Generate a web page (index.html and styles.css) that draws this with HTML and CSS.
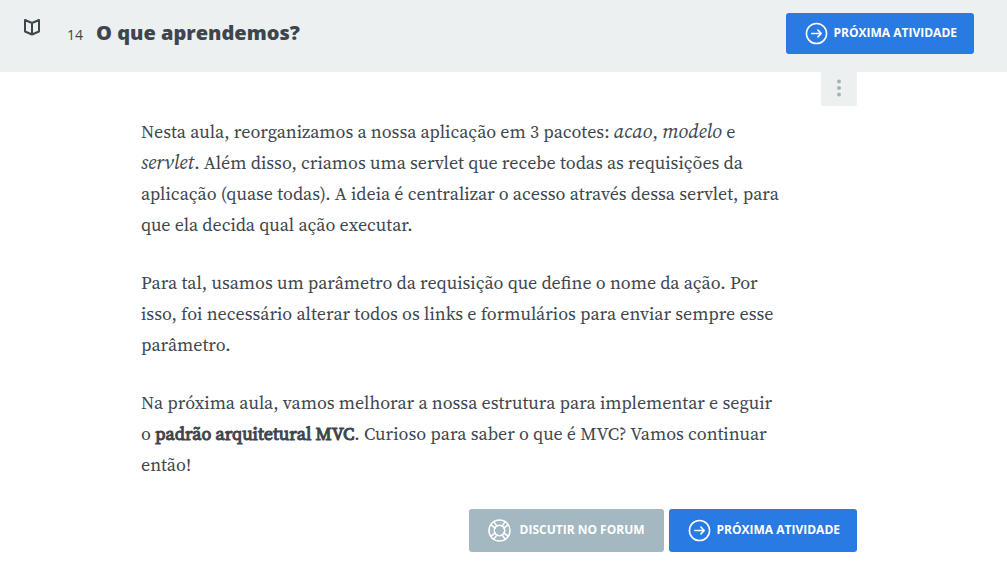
FILE: index.html
```html
<!DOCTYPE html>
<html lang="pt-BR">
<head>
<meta charset="utf-8">
<meta name="viewport" content="width=device-width, initial-scale=1">
<title>O que aprendemos?</title>
<link rel="stylesheet" href="styles.css">
</head>
<body>
<header class="topbar">
  <svg class="book-icon" viewBox="0 0 18 18" aria-hidden="true"><path d="M2 2 9 5 16 2V13.500L9 16.500 2 13.500ZM9 5V16"/></svg>
  <h1 class="heading"><span class="number">14</span><span class="title">O que aprendemos?</span></h1>
  <a class="button button-next" href="#next">
    <svg class="icon" viewBox="0 0 24 24" aria-hidden="true"><circle cx="12" cy="12" r="10.500"/><path d="M7 12H17M13.500 8.500 17 12l-3.500 3.500"/></svg>
    <span class="label">PRÓXIMA ATIVIDADE</span>
  </a>
</header>
<main class="content">
  <div class="container">
    <button class="more" type="button" aria-label="Mais opções">
      <svg class="dots" viewBox="0 0 4 18" aria-hidden="true"><circle cx="2" cy="2.500" r="2"/><circle cx="2" cy="9" r="2"/><circle cx="2" cy="15.500" r="2"/></svg>
    </button>
    <article class="text">
      <p>Nesta aula, reorganizamos a nossa aplicação em 3 pacotes: <em>acao</em>, <em>modelo</em> e <em>servlet</em>. Além disso, criamos uma servlet que recebe todas as requisições da aplicação (quase todas). A ideia é centralizar o acesso através dessa servlet, para que ela decida qual ação executar.</p>
      <p>Para tal, usamos um parâmetro da requisição que define o nome da ação. Por isso, foi necessário alterar todos os links e formulários para enviar sempre esse parâmetro.</p>
      <p>Na próxima aula, vamos melhorar a nossa estrutura para implementar e seguir o&nbsp;<strong>padrão arquitetural MVC</strong>. Curioso para saber o que é MVC? Vamos continuar então!</p>
    </article>
    <nav class="actions">
      <a class="button button-forum" href="#forum">
        <svg class="icon" viewBox="0 0 24 24" aria-hidden="true"><circle cx="12" cy="12" r="11"/><circle cx="12" cy="12" r="5.500"/><path d="M3.500 6.500 7.500 9.500M6.500 3.500 9.500 7.500M20.500 6.500 16.500 9.500M17.500 3.500 14.500 7.500M3.500 17.500 7.500 14.500M6.500 20.500 9.500 16.500M20.500 17.500 16.500 14.500M17.500 20.500 14.500 16.500"/></svg>
        <span class="label">DISCUTIR NO FORUM</span>
      </a>
      <a class="button button-next" href="#next">
        <svg class="icon" viewBox="0 0 24 24" aria-hidden="true"><circle cx="12" cy="12" r="10.500"/><path d="M7 12H17M13.500 8.500 17 12l-3.500 3.500"/></svg>
        <span class="label">PRÓXIMA ATIVIDADE</span>
      </a>
    </nav>
  </div>
</main>
</body>
</html>
```
FILE: styles.css
```css
* { box-sizing: border-box; }
body { margin: 0; background: #fff; color: #3d464d; font-family: "Open Sans", sans-serif; }
.topbar { display: flex; align-items: center; background: #ecf0f1; padding: 13px 33px 18px 23px; }
.book-icon { width: 18px; height: 18px; margin-bottom: 13px; fill: none; stroke: #3d464d; stroke-width: 2; stroke-linejoin: round; }
.heading { display: flex; align-items: baseline; flex: 1; gap: 13px; margin: 0 0 0 26px; font-size: 20px; line-height: 28px; }
.number { font-size: 14px; font-weight: 400; }
.title { font-weight: 800; }
.button { display: flex; align-items: center; gap: 6px; height: 41px; padding: 0 17px 0 19px; border-radius: 3px; color: #fff; font-size: 12px; font-weight: 700; text-decoration: none; white-space: nowrap; }
.label { padding-bottom: 2px; }
.button-next { background: #2a7ae4; }
.icon { width: 23px; height: 23px; fill: none; stroke: #fff; stroke-width: 1.6; stroke-linecap: round; stroke-linejoin: round; }
.content { padding: 0 9px 36px 0; }
.container { display: flex; flex-direction: column; max-width: 716px; margin: 0 auto; }
.more { align-self: flex-end; display: flex; justify-content: center; width: 36px; height: 34px; padding: 7px 0 0; border: 0; border-radius: 0 0 2px 2px; background: #ecf0f1; }
.dots { width: 4px; height: 18px; fill: #a3b3bb; }
.text { max-width: 640px; padding-top: 10px; font-family: "Source Serif Pro", "Source Serif 4", "Liberation Serif", serif; font-size: 18px; line-height: 31px; }
.text p { margin: 0 0 27px; }
.text em { font-size: 20px; line-height: 1; }
.text strong { font-weight: 400; -webkit-text-stroke: 1px; }
.actions { display: flex; justify-content: flex-end; gap: 5px; margin-top: 2px; }
.actions .button { height: 43px; }
.actions .button-forum { gap: 9px; padding-right: 19px; background: #a3b8c1; }
```
